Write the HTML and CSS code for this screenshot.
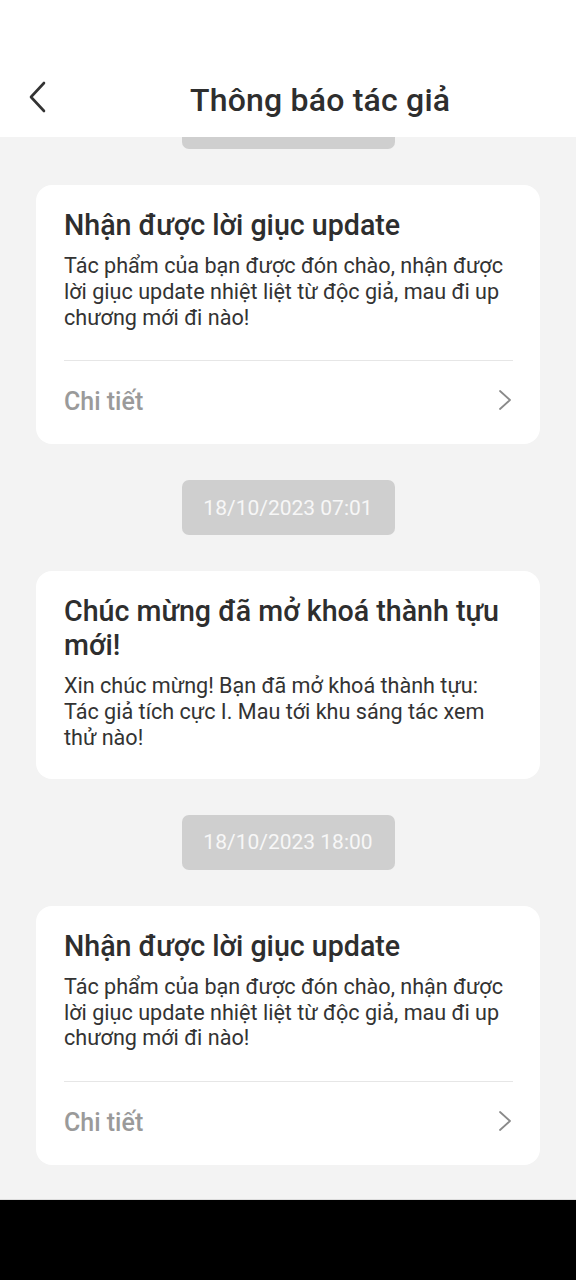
FILE: index.html
```html
<!DOCTYPE html>
<html lang="vi">
<head>
<meta charset="utf-8">
<link rel="stylesheet" href="styles.css">
</head>
<body>
<div class="screen">
  <header class="topbar">
    <button class="back" aria-label="Quay lại">
      <svg width="20" height="32" viewBox="0 0 20 32"><path d="M16 2 L3 16 L16 30" fill="none" stroke="#333" stroke-width="2.6" stroke-linecap="round" stroke-linejoin="round"/></svg>
    </button>
    <h1 class="title">Thông báo tác giả</h1>
  </header>
  <main class="viewport">
    <div class="list">
      <div class="stamp" aria-hidden="true"></div>
      <section class="card">
        <h2 class="card-title">Nhận được lời giục update</h2>
        <p class="card-body">Tác phẩm của bạn được đón chào, nhận được lời giục update nhiệt liệt từ độc giả, mau đi up chương mới đi nào!</p>
        <div class="card-foot">
          <span>Chi tiết</span>
          <svg class="chev" width="14" height="22" viewBox="0 0 14 22"><path d="M2 2 L12 11 L2 20" fill="none" stroke="#8a8a8a" stroke-width="1.8" stroke-linecap="round" stroke-linejoin="round"/></svg>
        </div>
      </section>
      <div class="stamp">18/10/2023 07:01</div>
      <section class="card">
        <h2 class="card-title">Chúc mừng đã mở khoá thành tựu mới!</h2>
        <p class="card-body">Xin chúc mừng! Bạn đã mở khoá thành tựu: Tác giả tích cực I. Mau tới khu sáng tác xem thử nào!</p>
      </section>
      <div class="stamp">18/10/2023 18:00</div>
      <section class="card">
        <h2 class="card-title">Nhận được lời giục update</h2>
        <p class="card-body">Tác phẩm của bạn được đón chào, nhận được lời giục update nhiệt liệt từ độc giả, mau đi up chương mới đi nào!</p>
        <div class="card-foot">
          <span>Chi tiết</span>
          <svg class="chev" width="14" height="22" viewBox="0 0 14 22"><path d="M2 2 L12 11 L2 20" fill="none" stroke="#8a8a8a" stroke-width="1.8" stroke-linecap="round" stroke-linejoin="round"/></svg>
        </div>
      </section>
    </div>
  </main>
  <footer class="navbar"></footer>
</div>
</body>
</html>
```

FILE: styles.css
```css
* { box-sizing: border-box; }
html, body { margin: 0; padding: 0; }
body {
  font-family: Roboto, "Noto Sans", sans-serif;
  color: #333;
  background: #000;
}
.screen {
  width: 576px;
  height: 1280px;
  display: flex;
  flex-direction: column;
  overflow: hidden;
}
.topbar {
  height: 137px;
  flex: none;
  background: #fff;
  display: flex;
  align-items: center;
  padding: 62px 0 0 26px;
  position: relative;
  z-index: 2;
}
.back {
  border: 0;
  background: none;
  padding: 0 0 6px;
  width: 24px;
  height: 38px;
  display: flex;
  align-items: center;
  justify-content: center;
}
.title {
  margin: 0 0 0 140px;
  font-size: 32px;
  font-weight: 500;
  color: #2e2e2e;
  line-height: 40px;
  letter-spacing: 0.2px;
}
.viewport {
  height: 1063px;
  flex: none;
  background: #f3f3f3;
  overflow: hidden;
  border-bottom: 1px solid #dcdcdc;
}
.list {
  display: flex;
  flex-direction: column;
  align-items: center;
  gap: 36px;
  margin-top: -43px;
}
.stamp {
  width: 213px;
  height: 55px;
  border-radius: 7px;
  background: #cfcfcf;
  color: #f7f7f7;
  font-size: 21px;
  display: flex;
  align-items: center;
  justify-content: center;
}
.card {
  width: 504px;
  background: #fff;
  border-radius: 16px;
  padding: 23px 27px 28px 28px;
}
.card-title {
  margin: 0;
  font-size: 28.6px;
  font-weight: 500;
  line-height: 34px;
  color: #2e2e2e;
}
.card-body {
  margin: 11px 0 0;
  font-size: 21.6px;
  line-height: 25.8px;
  color: #333;
}
.card-foot {
  margin: 30px 0 -3px;
  border-top: 1px solid #e6e6e6;
  padding-top: 24px;
  display: flex;
  justify-content: space-between;
  align-items: center;
  font-size: 25px;
  font-weight: 500;
  color: #9a9a9a;
  line-height: 34px;
}
.chev { margin: 0 1px 5px 0; }
.navbar {
  flex: 1;
  background: #000;
}
```
